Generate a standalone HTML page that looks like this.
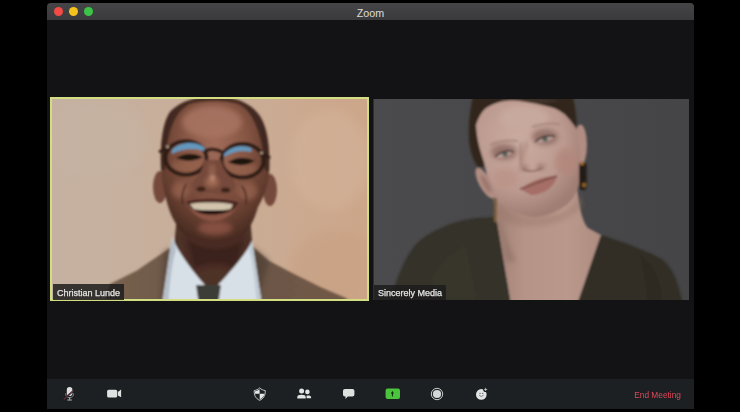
<!DOCTYPE html>
<html><head><meta charset="utf-8">
<style>
html,body{margin:0;padding:0;background:#000;width:740px;height:412px;overflow:hidden;font-family:"Liberation Sans",sans-serif;}
.abs{position:absolute}
#win{position:absolute;left:47px;top:3px;width:647px;height:406px;background:#131315;border-radius:4px 4px 0 0;overflow:hidden}
#title{position:absolute;left:0;top:0;width:647px;height:17px;background:linear-gradient(#454547,#3a3a3c)}
#title .t{position:absolute;left:0;width:647px;top:4.2px;text-align:center;color:#dcdcdc;font-size:10.7px;line-height:12px}
.dot{position:absolute;top:4.3px;width:9px;height:9px;border-radius:50%}
#bar{position:absolute;left:0;top:376px;width:647px;height:30px;background:#1d2022}
#photos{position:absolute;left:0;top:0}
.lbl{position:absolute;height:15.5px;background:rgba(28,28,28,0.85);color:#e6e6e6;font-size:9px;line-height:15.5px;padding:0 4px;white-space:nowrap}
.lbl span{position:relative;top:1.5px;-webkit-text-stroke:0.25px #e6e6e6}
#b1{position:absolute;left:50px;top:97px;width:315px;height:200px;border:2.4px solid #d3de82}
#end{position:absolute;left:634.3px;top:389px;color:#dc4a58;font-size:8.3px;line-height:12px;white-space:nowrap}
</style></head><body>
<div id="win">
  <div id="title">
    <div class="dot" style="left:6.7px;background:#f24b46"></div>
    <div class="dot" style="left:21.6px;background:#f6c21c"></div>
    <div class="dot" style="left:36.5px;background:#3bc445"></div>
    <div class="t">Zoom</div>
  </div>
  <div id="bar"></div>
</div>
<svg id="photos" width="740" height="412" viewBox="0 0 740 412">
  <defs>
    <clipPath id="c1"><rect x="52" y="99" width="316" height="201"/></clipPath>
    <clipPath id="c2"><rect x="373.5" y="99" width="315.5" height="201"/></clipPath>
    <filter id="bl1" x="-20%" y="-20%" width="140%" height="140%"><feGaussianBlur stdDeviation="0.8"/></filter>
    <filter id="bl2" x="-30%" y="-30%" width="160%" height="160%"><feGaussianBlur stdDeviation="2.5"/></filter>
    <filter id="bl4" x="-50%" y="-50%" width="200%" height="200%"><feGaussianBlur stdDeviation="5"/></filter>
    <linearGradient id="bg1" x1="0" y1="0" x2="1" y2="0">
      <stop offset="0" stop-color="#c5b1a1"/>
      <stop offset="0.5" stop-color="#c8ae99"/>
      <stop offset="1" stop-color="#cda689"/>
    </linearGradient>
    <linearGradient id="bg2" x1="0" y1="0" x2="1" y2="0">
      <stop offset="0" stop-color="#4b4b4d"/>
      <stop offset="1" stop-color="#454547"/>
    </linearGradient>
    <radialGradient id="skinM" cx="0.5" cy="0.32" r="0.64">
      <stop offset="0" stop-color="#a06c5a"/>
      <stop offset="0.45" stop-color="#875644"/>
      <stop offset="0.8" stop-color="#643d2f"/>
      <stop offset="1" stop-color="#4a2c22"/>
    </radialGradient>
    <radialGradient id="skinW" cx="0.42" cy="0.35" r="0.65">
      <stop offset="0" stop-color="#cbaca1"/>
      <stop offset="0.65" stop-color="#bc9a8f"/>
      <stop offset="1" stop-color="#a07e74"/>
    </radialGradient>
    <linearGradient id="neckW" x1="0" y1="0" x2="1" y2="0">
      <stop offset="0" stop-color="#a08074"/>
      <stop offset="0.3" stop-color="#b69488"/>
      <stop offset="0.7" stop-color="#ba988c"/>
      <stop offset="1" stop-color="#ae8c80"/>
    </linearGradient>
    <linearGradient id="jack" x1="0" y1="0" x2="1" y2="0">
      <stop offset="0" stop-color="#76604e"/>
      <stop offset="0.5" stop-color="#6a5546"/>
      <stop offset="1" stop-color="#725a46"/>
    </linearGradient>
  </defs>
  <g clip-path="url(#c1)">
    <rect x="52" y="99" width="316" height="201" fill="url(#bg1)"/>
    <ellipse cx="95" cy="140" rx="50" ry="40" fill="#c6b4a4" filter="url(#bl4)" opacity="0.5"/>
    <ellipse cx="330" cy="160" rx="40" ry="50" fill="#d2b29a" filter="url(#bl4)" opacity="0.6"/>
    <ellipse cx="335" cy="270" rx="45" ry="40" fill="#c9a084" filter="url(#bl4)" opacity="0.6"/>
    <g filter="url(#bl1)">
      <!-- jacket -->
      <path d="M104,305 L110,284 L137,270.4 L163.6,252.2 L171,247 L252,246 L269,260.8 L294.6,274.2 L321.4,287.6 L346,298 L352,305 Z" fill="url(#jack)"/>
      <path d="M252,246 L269,260.8 L258,300 L254,300 Z" fill="#4a3a30" opacity="0.6" filter="url(#bl2)"/>
      <path d="M171,247 L163.6,252.2 L160,300 L166,300 Z" fill="#4a3a30" opacity="0.5" filter="url(#bl2)"/>
      <!-- neck -->
      <path d="M177,215 L250,215 L256,292 L170,292 Z" fill="#4e3027"/>
      <path d="M186,236 C200,250 225,252 244,238 L236,270 C225,262 205,262 194,270 Z" fill="#3a241d" filter="url(#bl2)"/>
      <!-- shirt -->
      <path d="M172,237 C178,252 193,272 205,285 L218,285 C232,270 246,254 252,241 L262,305 L162,305 Z" fill="#d8e0e7"/>
      <path d="M172,237 L163,305 L168,305 C170,282 172,262 176,250 Z" fill="#b4bec9"/>
      <path d="M252,241 L262,305 L257,305 C255,285 253,262 249,250 Z" fill="#c0cad4"/>
      <!-- tie -->
      <path d="M196,285 L221,285 L218,305 L199,305 Z" fill="#3d3c39"/>
      <!-- ears -->
      <ellipse cx="160" cy="187" rx="7" ry="16" fill="#74493a"/>
      <ellipse cx="270" cy="190" rx="7" ry="16" fill="#74493a"/>
      <!-- head -->
      <path d="M214,96.5 C238,96.5 256,105 263,122 C269,136 270,155 269,175 C267,190 262,200 258,207 C254,222 246,236 234,243 C224,248 206,248 196,244 C184,237 174,224 169,209 C165,197 162,182 161,167 C160,142 163,122 170,112 C180,101 196,96.5 214,96.5 Z" fill="url(#skinM)"/>
      <!-- hair sides -->
      <path d="M214,96.5 C238,96.5 256,105 263,122 C269,136 270,155 269,172 L265,170 C263,140 255,113 240,105 C228,100 200,100 188,105 C174,113 166,135 165,170 L161,170 C160,142 163,122 170,112 C180,101 196,96.5 214,96.5 Z" fill="#2a1a16" opacity="0.65"/>
      <!-- forehead highlight -->
      <ellipse cx="212" cy="122" rx="30" ry="16" fill="#aa7664" filter="url(#bl2)" opacity="0.8"/>
      <!-- cheek highlights -->
      <ellipse cx="181" cy="190" rx="9" ry="9" fill="#8e5c48" filter="url(#bl2)"/>
      <ellipse cx="247" cy="191" rx="10" ry="9" fill="#8e5c48" filter="url(#bl2)"/>
      <ellipse cx="215" cy="228" rx="17" ry="7" fill="#845040" filter="url(#bl2)"/>
      <!-- lens interior -->
      <ellipse cx="186" cy="167" rx="16" ry="7" fill="#9a6650" opacity="0.6" filter="url(#bl2)"/>
      <ellipse cx="242.5" cy="170" rx="16" ry="7" fill="#9a6650" opacity="0.6" filter="url(#bl2)"/>
      <!-- eyes -->
      <path d="M176,158 Q189,150 203,157 Q189,164 176,158 Z" fill="#1f120e"/>
      <path d="M228,162 Q241,154 255,161 Q241,169 228,162 Z" fill="#1f120e"/>
      <!-- glasses -->
      <ellipse cx="186" cy="158" rx="20.5" ry="16.8" fill="none" stroke="#2e1c14" stroke-width="4"/>
      <ellipse cx="242.5" cy="160.8" rx="21" ry="16.8" fill="none" stroke="#2e1c14" stroke-width="4"/>
      <path d="M205,151 Q213,147 222,152" fill="none" stroke="#2e1c14" stroke-width="3.6"/>
      <path d="M167,148 L159,152" stroke="#2e1c14" stroke-width="3"/>
      <path d="M262,153 L270,158" stroke="#2e1c14" stroke-width="3"/>
      <circle cx="167.5" cy="146.8" r="1.3" fill="#c8b49c"/>
      <circle cx="261.5" cy="153" r="1.3" fill="#c8b49c"/>
      <path d="M172,150 C179,142 197,140 205,148 L204,151 C196,148 182,148 172,154 Z" fill="#6398bd"/>
      <path d="M224,154 C230,146 246,144 252,149 L251,152 C243,150 233,151 224,157 Z" fill="#6398bd"/>
      <!-- nose -->
      <path d="M204,160 C203,168 200,174 196,178 C191,182 191,189 197,192 C203,194 208,192 213,193 C218,194 224,195 230,193 C237,190 236,181 231,177 C226,173 223,167 221,160 Z" fill="#74483a"/>
      <ellipse cx="212" cy="172" rx="3" ry="9" fill="#9a6852" filter="url(#bl2)"/>
      <ellipse cx="212" cy="182" rx="7" ry="5" fill="#a46e58" filter="url(#bl2)"/>
      <ellipse cx="212.5" cy="178" rx="2.5" ry="3" fill="#b88670" filter="url(#bl1)"/>
      <ellipse cx="201" cy="189" rx="4.5" ry="2.5" fill="#3a2219"/>
      <ellipse cx="225.5" cy="190" rx="4.5" ry="2.5" fill="#3a2219"/>
      <!-- smile lines -->
      <path d="M186,184 C182,192 181,198 183,204" fill="none" stroke="#442a20" stroke-width="1.6"/>
      <path d="M242,186 C246,192 247,198 246,204" fill="none" stroke="#442a20" stroke-width="1.6"/>
      <!-- mouth -->
      <path d="M185,200 C198,197 226,197 240,201 C236,212 226,221 213,221 C200,221 189,212 185,200 Z" fill="#8a5444"/>
      <path d="M186,201 C199,198 225,198 239,202 C236,209 231,214 213,214 C196,214 190,209 186,201 Z" fill="#4a2820"/>
      <path d="M190,204 C202,202 222,202 233,204.5 C232,206.5 231,208 230,209.5 C222,210.5 204,210.5 194,209.5 C193,207.5 191,206 190,204 Z" fill="#d2c4ac"/>
      <path d="M194,209.5 C204,211 222,211 230,209.5 C227,213 220,214.5 212,214.5 C204,214.5 197,213 194,209.5 Z" fill="#1a0e0b"/>
      <!-- chin -->
      
    </g>
  </g>
  <g clip-path="url(#c2)">
    <rect x="373" y="99" width="316" height="201" fill="url(#bg2)"/>
    
    <g filter="url(#bl1)">
      <!-- neck/chest -->
      <path d="M492,190 L577,186 C579,205 582,222 588,228 L601,235 L577,305 L511,305 L496,217 Z" fill="url(#neckW)"/>
      <path d="M497,203 C512,214 532,220 560,214 C572,208 578,200 580,192 L582,206 C570,222 545,228 520,226 C508,224 500,220 497,216 Z" fill="#967468" opacity="0.4" filter="url(#bl2)"/>
      <path d="M500,218 C505,235 510,250 516,262 L506,262 L498,222 Z" fill="#8a6a60" opacity="0.6" filter="url(#bl2)"/>
      <!-- sweater -->
      <path d="M388,305 C396,282 402,262 415,245 C428,232 450,222 475,218 L496,217 L511,305 Z" fill="#35322a"/>
      <path d="M601,235 C615,239 640,248 660,258 C672,266 678,280 683,305 L577,305 Z" fill="#302d26"/>
      <path d="M430,280 C440,262 452,250 466,244 L478,300 L435,300 Z" fill="#3a372e" opacity="0.5" filter="url(#bl2)"/>
      <path d="M640,255 C650,262 660,275 662,300 L648,300 C646,285 644,270 640,255 Z" fill="#2a2822" opacity="0.5"/>
      <!-- hair silhouette -->
      <path d="M474,92 L572,92 C575,105 577,118 577,130 L560,140 L490,165 L479,168 C472,160 470,150 469,140 C468,125 470,108 474,92 Z" fill="#33271f"/>
      <path d="M500,99 C520,97 540,98 560,101 L540,104 L505,104 Z" fill="#4a3a30" opacity="0.6"/>
      <!-- ears -->
            <ellipse cx="580.5" cy="145" rx="6.5" ry="20.5" fill="#b08c82"/>
      <!-- face -->
      <path d="M476,125 C479,116 483,110 487,107.5 C495,102 505,100.5 512,100.4 C520,100.5 526,102 531,103 C540,104.5 550,106.5 556,109 C562,112 566,115 568,118 C571,121 573,124 576,128 C580,145 581,170 579,184 C577,194 572,202 562,208 C552,214 543,217 533,217 C522,216 508,210 498,202 C491,192 487,176 484,162 C480,150 477,140 476,125 Z" fill="url(#skinW)"/>
      <ellipse cx="485" cy="183" rx="6" ry="17" transform="rotate(-28 485 183)" fill="#b08c82"/>
      <ellipse cx="486" cy="184" rx="2.5" ry="10" transform="rotate(-28 486 184)" fill="#9a766c" filter="url(#bl1)"/>
      <!-- cheek blush -->
      <ellipse cx="506" cy="178" rx="12" ry="10" fill="#bb9084" filter="url(#bl2)" opacity="0.6"/>
      <ellipse cx="566" cy="162" rx="11" ry="14" fill="#b3877b" filter="url(#bl2)" opacity="0.8"/>
      <!-- forehead highlight -->
      <ellipse cx="524" cy="118" rx="24" ry="12" fill="#c8a99e" filter="url(#bl2)"/>
      <!-- eye sockets -->
      <ellipse cx="504" cy="152" rx="13" ry="8" fill="#94726a" filter="url(#bl2)"/>
      <ellipse cx="545" cy="137" rx="13" ry="8" fill="#94726a" filter="url(#bl2)"/>
      <path d="M521,143 C519,150 519,157 521,163" fill="none" stroke="#9c786c" stroke-width="3" filter="url(#bl2)"/>
      <!-- earrings -->
      <rect x="579" y="162" width="7.5" height="28" rx="3.7" fill="#241a14"/>
      <circle cx="582" cy="163.5" r="2" fill="#a0702a"/>
      <circle cx="584" cy="185" r="2.2" fill="#8a6020"/>
      <rect x="494" y="198" width="3" height="24" fill="#7a6038"/>
      <!-- eyes -->
      <path d="M495,157 Q504,149 513.5,152 Q505,159.5 495,157 Z" fill="#b89e96"/>
      <circle cx="505" cy="154" r="2.6" fill="#586058"/>
      <path d="M495,157 Q504,148.5 513.5,152" fill="none" stroke="#3a2c28" stroke-width="1.6"/>
      <path d="M534,142 Q545,133 555,136" fill="none" stroke="#3a2c28" stroke-width="0"/>
      <path d="M535,142 Q545,134 555,136.5 Q546,144.5 535,142 Z" fill="#b89e96"/>
      <circle cx="545" cy="139" r="2.6" fill="#586058"/>
      <path d="M535,142 Q545,133.5 555,136.5" fill="none" stroke="#3a2c28" stroke-width="1.6"/>
      <!-- brows -->
      <path d="M490,145 Q502,139 518,141" fill="none" stroke="#9a7a70" stroke-width="2.5" opacity="0.5"/>
      <path d="M532,127 Q545,122 560,124" fill="none" stroke="#9a7a70" stroke-width="2.5" opacity="0.5"/>
      <!-- nose -->
      <path d="M527,142 C523,150 521,158 521,166" fill="none" stroke="#a27e73" stroke-width="3" filter="url(#bl2)"/>
      <ellipse cx="532" cy="163" rx="6" ry="5" fill="#c6a498"/>
      <ellipse cx="524" cy="168" rx="4" ry="3" fill="#9a766b" filter="url(#bl2)"/>
      <ellipse cx="541" cy="167" rx="4" ry="3" fill="#9a766b" filter="url(#bl2)"/>
      <path d="M523,169 Q532,174 542,168" fill="none" stroke="#8a665c" stroke-width="1.5"/>
      <!-- lips -->
      <path d="M520,189 C530,181 546,175 557,176 C555,187 543,195 531,195 Z" fill="#a56e66"/>
      <path d="M520,189 C532,185 546,179 557,176" fill="none" stroke="#6e4540" stroke-width="1.4"/>
    </g>
  </g>
</svg>
<svg id="icons" style="position:absolute;left:0;top:0" width="740" height="412" viewBox="0 0 740 412">
  <defs><filter id="soft" x="-10%" y="-10%" width="120%" height="120%"><feGaussianBlur stdDeviation="0.3"/></filter></defs>
  <g filter="url(#soft)">
  <!-- mic -->
  <g>
    <rect x="66.8" y="387.1" width="5.6" height="9" rx="2.8" fill="#dcdede"/>
    <path d="M65.6,393.5 C65.6,396.5 67.3,397.6 69.6,397.6 C71.9,397.6 73.6,396.5 73.6,393.5" fill="none" stroke="#9a9c9c" stroke-width="0.8"/>
    <rect x="69.1" y="397.4" width="1" height="2.2" fill="#b8baba"/>
    <rect x="67.4" y="399.5" width="4.4" height="1" fill="#b8baba"/>
    <path d="M63.8,399.4 L73.6,390.6" stroke="#1d2022" stroke-width="1.6"/>
    <path d="M63.8,399.4 L73.6,390.6" stroke="#8c3a4c" stroke-width="0.9"/>
  </g>
  <!-- video -->
  <rect x="107.1" y="389.7" width="10.1" height="7.9" rx="1.6" fill="#e0e2e2"/>
  <path d="M117.9,392.1 L121.1,389.6 L121.1,397.3 L117.9,395.5 Z" fill="#e0e2e2"/>
  <!-- shield -->
  <g>
    <path d="M259.6,387.9 C261.4,389.5 263.3,390.3 265.3,390.6 C265.4,395.6 263.6,398.6 259.7,400.3 C255.8,398.6 254.1,395.6 254.2,390.6 C256.2,390.3 258,389.5 259.6,387.9 Z" fill="#1d2022" stroke="#d6d8d8" stroke-width="0.9"/>
    <path d="M259.6,389.2 L259.6,393.8 L255.1,393.8 C255,392.5 255,391.8 255.1,391.3 C256.8,390.9 258.3,390.3 259.6,389.2 Z" fill="#e6e8e8"/>
    <path d="M259.7,393.8 L264.4,393.8 C264.1,396.3 262.6,398.2 259.7,399.4 Z" fill="#e6e8e8"/>
  </g>
  <!-- participants -->
  <g fill="#e2e4e4">
    <circle cx="301.6" cy="390.9" r="2.5"/>
    <circle cx="307.4" cy="391.9" r="2.3"/>
    <path d="M297.3,398.6 L305.7,398.6 L305.7,397 C305.7,395.6 304.3,394.8 301.5,394.8 C298.7,394.8 297.3,395.6 297.3,397 Z"/>
    <path d="M306.6,398.3 L311.1,398.3 L311.1,397.2 C311.1,396 310,395.4 308.3,395.4 C307.6,395.4 307,395.5 306.5,395.7 C306.6,396.3 306.6,397.2 306.6,398.3 Z"/>
  </g>
  <!-- chat -->
  <path d="M345,389 L352.4,389 C353.6,389 354.4,389.8 354.4,391 L354.4,394.4 C354.4,395.6 353.6,396.4 352.4,396.4 L347.8,396.4 L345.4,399.1 L345.6,396.4 L345,396.4 C343.8,396.4 343,395.6 343,394.4 L343,391 C343,389.8 343.8,389 345,389 Z" fill="#dfe1e1"/>
  <!-- share -->
  <rect x="385.6" y="388.4" width="14.4" height="10.7" rx="2" fill="#4cc43c"/>
  <path d="M392.4,391 L394,393.4 L392.9,393.4 L392.9,396.4 L391.9,396.4 L391.9,393.4 L390.8,393.4 Z" fill="#0c260c"/>
  <!-- record -->
  <circle cx="437" cy="394" r="5.7" fill="none" stroke="#c8caca" stroke-width="1"/>
  <circle cx="437" cy="394" r="4.1" fill="#d6d8d8"/>
  <!-- reactions -->
  <g>
    <circle cx="481.3" cy="394.4" r="5.3" fill="#e2e4e4"/>
    <circle cx="485.8" cy="389.4" r="2.6" fill="#1d2022"/>
    <path d="M485.6,387.9 L485.6,391 M484.1,389.5 L487.2,389.5" stroke="#c8caca" stroke-width="0.8"/>
    <circle cx="480" cy="393.4" r="0.6" fill="#555"/>
    <circle cx="482.7" cy="393.4" r="0.6" fill="#555"/>
    <path d="M479.1,395.3 Q481.3,397.6 483.5,395.3" fill="none" stroke="#555" stroke-width="0.7"/>
  </g>
</g>
</svg>
<div id="b1"></div>
<div class="lbl" style="left:53px;top:284.3px"><span>Christian Lunde</span></div>
<div class="lbl" style="left:374px;top:284.5px"><span>Sincerely Media</span></div>
<div id="end">End Meeting</div>
</body></html>
